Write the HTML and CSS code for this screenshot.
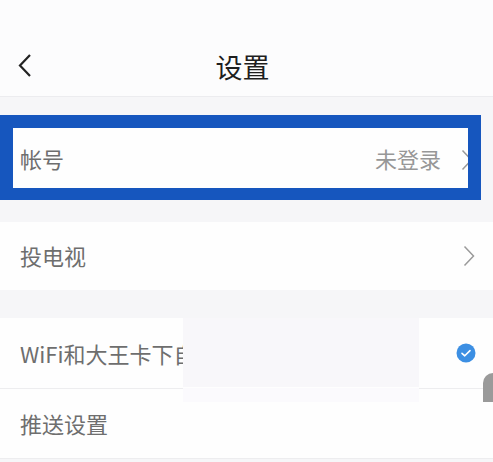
FILE: index.html
```html
<!DOCTYPE html>
<html>
<head>
<meta charset="utf-8">
<meta name="viewport" content="width=device-width, initial-scale=1.0">
<link rel="stylesheet" href="styles.css">
</head>
<body>
<div class="header">
  <svg class="back" width="16" height="26" viewBox="0 0 16 26">
    <polyline points="13,2 3,12.5 13,23" fill="none" stroke="#222" stroke-width="2.2"/>
  </svg>
  <div class="title">设置</div>
</div>

<div class="gap gap1"></div>
<div class="marked">
  <div class="row account">
    <span class="label">帐号</span>
    <span class="value">未登录</span>
    <svg class="arrow" width="12" height="22" viewBox="0 0 12 22">
      <polyline points="1.5,1.5 10.5,11 1.5,20.5" fill="none" stroke="#9a9a9a" stroke-width="1.5"/>
    </svg>
  </div>
</div>
<div class="gap gap2"></div>
<div class="row tv">
  <span class="label">投电视</span>
  <svg class="arrow" width="12" height="22" viewBox="0 0 12 22">
    <polyline points="1.5,1.5 10.5,11 1.5,20.5" fill="none" stroke="#9a9a9a" stroke-width="1.5"/>
  </svg>
</div>
<div class="gap gap3"></div>
<div class="group">
  <div class="row wifi">
    <span class="label">WiFi和大王卡下自动播放</span>
    <svg class="check" width="20" height="20" viewBox="0 0 20 20">
      <circle cx="10" cy="10" r="9.5" fill="#3c8fe3"/>
      <polyline points="6,10.3 8.8,12.8 14,7.6" fill="none" stroke="#fff" stroke-width="1.6" stroke-linecap="round" stroke-linejoin="round"/>
    </svg>
  </div>
  <div class="row push">
    <span class="label">推送设置</span>
  </div>
  <div class="cover"><div class="cover-low"></div></div>
  <div class="handle"></div>
</div>
</body>
</html>
```

FILE: styles.css
```css
body {
  margin: 0;
  background-color: #f6f6f8;
  font-family: "Noto Sans CJK SC", "Noto Sans", sans-serif;
  overflow: hidden;
}
.header {
  height: 96px;
  background-color: #fcfcfd;
  border-bottom: 1px solid #ececef;
  display: flex;
  align-items: center;
  justify-content: center;
  position: relative;
}
.back {
  position: absolute;
  left: 17px;
  top: 53px;
}
.title {
  font-size: 27px;
  color: #1e1e1e;
  margin-top: 36px;
  margin-right: 8px;
  line-height: 1;
}
.gap1 { height: 18px; }
.gap2 { height: 22px; }
.gap3 { height: 28px; }
.row {
  display: flex;
  align-items: center;
  background-color: #fefefe;
  padding: 0 20px;
  font-size: 22px;
  color: #6e6e6e;
}
.label {
  flex: 1;
  white-space: nowrap;
}
.marked {
  width: 455px;
  border: 13px solid #1656be;
  border-bottom-width: 12px;
  background-color: #1656be;
}
.account {
  height: 60px;
  padding-left: 7px;
  padding-right: 0;
  overflow: hidden;
}
.value {
  color: #979797;
  margin-right: 20px;
}
.account .arrow {
  margin-top: 3px;
  margin-right: -5px;
}
.tv {
  height: 68px;
}
.tv .label {
  margin-top: -3px;
}
.tv .arrow {
  margin-right: -2px;
}
.group {
  position: relative;
  background-color: #fefefe;
}
.wifi {
  height: 70px;
  border-bottom: 1px solid #ededef;
}
.check {
  margin-right: -3px;
}
.push {
  height: 69px;
  border-bottom: 1px solid #ededef;
}
.push .label {
  margin-top: -2px;
}
.cover {
  position: absolute;
  left: 183px;
  top: 0;
  width: 236px;
  height: 69px;
  background-color: #f8f7fa;
}
.cover-low {
  position: absolute;
  top: 70px;
  left: 0;
  width: 236px;
  height: 14px;
  background-color: #fbfafd;
}
.handle {
  position: absolute;
  left: 483px;
  top: 55px;
  width: 20px;
  height: 29px;
  background-color: #9a9a9a;
  border-top-left-radius: 10px;
}
```
